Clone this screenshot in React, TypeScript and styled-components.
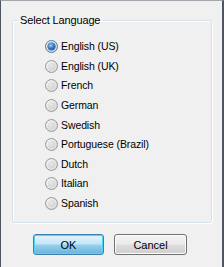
import React, { useState } from "react";
import styled, { createGlobalStyle, css } from "styled-components";

const GlobalStyle = createGlobalStyle`
  html, body {
    margin: 0;
    padding: 0;
    background: #f0f0f0;
  }
  body {
    font-family: "Liberation Sans", Arial, sans-serif;
    font-size: 11px;
    color: #000;
  }
`;

const languages = [
  "English (US)",
  "English (UK)",
  "French",
  "German",
  "Swedish",
  "Portuguese (Brazil)",
  "Dutch",
  "Italian",
  "Spanish",
];

const App = () => {
  const [selected, setSelected] = useState(0);

  return (
    <>
      <GlobalStyle />
      <Window>
        <GroupBox>
          <Legend>Select Language</Legend>
          <List>
            {languages.map((name, i) => (
              <Row key={name} onClick={() => setSelected(i)}>
                <Radio $checked={i === selected} />
                <Label>{name}</Label>
              </Row>
            ))}
          </List>
        </GroupBox>
        <Buttons>
          <Button $default>OK</Button>
          <Button $wide>Cancel</Button>
        </Buttons>
      </Window>
    </>
  );
};

const Window = styled.div`
  width: 224px;
  height: 267px;
  box-sizing: border-box;
  border-top: 1px solid #a3a7ad;
  border-left: 1px solid #4f5660;
  border-right: 2px solid #4f5660;
  background: #f0f0f0;
  padding: 13px 10px 0 11px;
  display: flex;
  flex-direction: column;
`;

const GroupBox = styled.fieldset`
  margin: 0;
  padding: 10px 0 0 0;
  height: 209px;
  box-sizing: border-box;
  border: 1px solid #d5dfe5;
  border-radius: 3px;
  box-shadow: inset 1px 1px 0 #fff, 1px 1px 0 #fff;
  min-width: 0;
`;

const Legend = styled.legend`
  margin-left: 5px;
  padding: 0 3px 0 2px;
  font-size: 11px;
  line-height: 13px;
  letter-spacing: -0.15px;
  color: #000;
`;

const List = styled.div`
  display: flex;
  flex-direction: column;
  padding-left: 32px;
`;

const Row = styled.label`
  display: flex;
  align-items: center;
  height: 19.6px;
  cursor: default;
`;

const Radio = styled.span<{ $checked?: boolean }>`
  position: relative;
  width: 13px;
  height: 13px;
  box-sizing: border-box;
  border-radius: 50%;
  border: 1px solid #9a9a9a;
  background: radial-gradient(circle at 35% 35%, #f8f8f8 0%, #e0e0e0 60%, #d2d2d2 100%);
  margin-right: 3px;
  flex: none;

  &::after {
    content: "";
    position: absolute;
    left: 2px;
    top: 2px;
    width: 7px;
    height: 7px;
    border-radius: 50%;
    background: radial-gradient(circle at 40% 35%, #e8e8e8 0%, #cdcdcd 100%);
  }

  ${(p) =>
    p.$checked &&
    css`
      border-color: #3c7fb1;
      &::after {
        background: radial-gradient(circle at 40% 35%, #9fd3f6 0%, #2d74c3 50%, #0d3f86 100%);
        box-shadow: 0 0 0 0.5px #0e4a93;
      }
    `}
`;

const Label = styled.span`
  font-size: 10.5px;
  line-height: 13px;
  letter-spacing: -0.1px;
  white-space: nowrap;
`;

const Buttons = styled.div`
  display: flex;
  gap: 10px;
  padding: 11px 0 0 21px;
`;

const Button = styled.button<{ $default?: boolean; $wide?: boolean }>`
  width: ${(p) => (p.$wide ? "73px" : "71px")};
  height: 21px;
  box-sizing: border-box;
  padding: 0;
  font-family: "Liberation Sans", Arial, sans-serif;
  font-size: 11px;
  color: #000;
  border: 1px solid #707070;
  border-radius: 3px;
  background: linear-gradient(#f2f2f2 0%, #ebebeb 48%, #dddddd 52%, #cfcfcf 100%);
  box-shadow: inset 0 0 0 1px #fcfcfc;

  ${(p) =>
    p.$default &&
    css`
      border-color: #3c7fb1;
      background: linear-gradient(#e5f4fc 0%, #c4e5f6 48%, #98d1ef 52%, #68b3db 100%);
      box-shadow: inset 0 0 0 1px #48d8fb;
    `}
`;

export default App;
